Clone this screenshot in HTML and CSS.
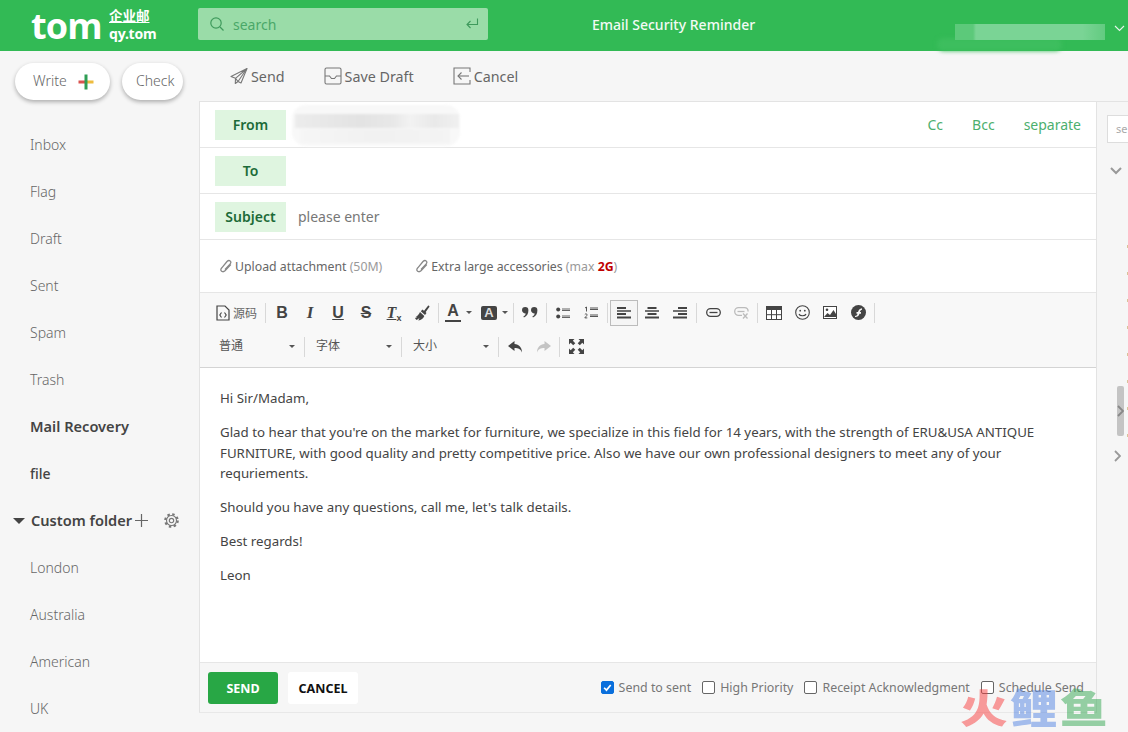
FILE: index.html
```html
<!DOCTYPE html>
<html lang="en">
<head>
<meta charset="utf-8">
<title>Compose</title>
<link rel="stylesheet" href="styles.css">
</head>
<body>
<div class="app">
  <header class="topbar">
    <div class="logo">
      <span class="logo-main">tom</span>
      <span class="logo-sub"><span class="logo-cn">企业邮</span><span class="logo-en">qy.tom</span></span>
    </div>
    <div class="search">
      <svg width="16" height="16" viewBox="0 0 16 16" fill="none" stroke="#3f9a5c" stroke-width="1.2"><circle cx="7" cy="7" r="5.2"/><path d="M11 11l3.5 3.5"/></svg>
      <span class="search-text">search</span>
      <svg class="search-enter" width="14" height="14" viewBox="0 0 14 14" fill="none" stroke="#3f9a5c" stroke-width="1.1"><path d="M12.5 1.5v6H2"/><path d="M5.5 4L2 7.5 5.5 11"/></svg>
    </div>
    <div class="top-title">Email Security Reminder</div>
    <div class="user">
      <div class="user-blur-b"></div>
      <div class="user-blur-a"></div>
      <svg class="user-caret" width="11" height="7" viewBox="0 0 11 7" fill="none" stroke="#e8f6ec" stroke-width="1.1"><path d="M1 1l4.500 4.500L10 1"/></svg>
    </div>
  </header>
  <div class="body">
    <aside class="sidebar">
      <div class="side-actions">
        <button class="pill pill-write"><span class="pill-text">Write</span>
          <svg width="16" height="16" viewBox="0 0 16 16"><rect x="0.500" y="6.500" width="7" height="3" fill="#d9534f"/><rect x="8.500" y="6.500" width="7" height="3" fill="#eebc3f"/><rect x="6.500" y="0.500" width="3" height="15" fill="#2f9e55"/></svg>
        </button>
        <button class="pill pill-check"><span class="pill-text">Check</span></button>
      </div>
      <ul class="folders">
        <li>Inbox</li>
        <li>Flag</li>
        <li>Draft</li>
        <li>Sent</li>
        <li>Spam</li>
        <li>Trash</li>
        <li class="strong">Mail Recovery</li>
        <li class="file">file</li>
        <li class="custom">
          <span class="tri"></span>
          <span class="custom-name">Custom folder</span>
          <svg class="custom-plus" width="15" height="15" viewBox="0 0 15 15" stroke="#666" stroke-width="1.2"><path d="M7.500 1v13M1 7.500h13"/></svg>
          <svg class="custom-gear" width="15" height="15" viewBox="0 0 24 24" fill="none" stroke="#777"><circle cx="12" cy="12" r="8" stroke-width="1.800"/><circle cx="12" cy="12" r="10" stroke-width="3.400" stroke-dasharray="3.900 3.950"/><circle cx="12" cy="12" r="3.500" stroke-width="1.800"/></svg>
        </li>
        <li>London</li>
        <li>Australia</li>
        <li>American</li>
        <li>UK</li>
      </ul>
    </aside>
    <main class="main">
      <div class="actions">
        <a class="action act-send">
          <svg width="18" height="18" viewBox="0 0 18 18" fill="none" stroke="#777" stroke-width="1.100" stroke-linejoin="round"><path d="M17 1.500L1 9.500l4.500 1.800L17 1.500 8 14.500 5.500 11.300l-.2 5.200 2.700-2"/><path d="M8 14.500l3 1.500L17 1.500"/></svg>
          Send</a>
        <a class="action act-save">
          <svg width="18" height="18" viewBox="0 0 18 18" fill="none" stroke="#777" stroke-width="1.100"><rect x="1" y="1" width="16" height="16" rx="1.500"/><path d="M1 9h4.500l2 2.500h3l2-2.500H17"/></svg>
          Save Draft</a>
        <a class="action act-cancel">
          <svg width="18" height="18" viewBox="0 0 18 18" fill="none" stroke="#777" stroke-width="1.100"><path d="M17 5V1H1v16h16v-4"/><path d="M16 9H5"/><path d="M8.500 5.500L5 9l3.500 3.500"/></svg>
          Cancel</a>
      </div>
      <div class="compose-wrap">
        <section class="compose">
          <div class="field">
            <span class="field-label">From</span>
            <div class="from-blur"><span class="from-blur-a"></span><span class="from-blur-b"></span></div>
            <div class="field-links"><a>Cc</a><a>Bcc</a><a>separate</a></div>
          </div>
          <div class="field">
            <span class="field-label">To</span>
          </div>
          <div class="field">
            <span class="field-label">Subject</span>
            <span class="placeholder">please enter</span>
          </div>
          <div class="attach">
            <span class="attach-item">
              <svg width="12" height="14" viewBox="0 0 12 14" fill="none" stroke="#888" stroke-width="1.300"><path d="M10.800 5.500L5 11.800c-1.500 1.500-3.500 1-4-.2-.4-1 0-2 .8-2.800L7 2.500c1-1 2.500-1.200 3.300-.4.800.8.600 2-.3 3L5 10.500"/></svg>
              <span>Upload attachment <span class="muted">(50M)</span></span></span>
            <span class="attach-item attach-large">
              <svg width="12" height="14" viewBox="0 0 12 14" fill="none" stroke="#888" stroke-width="1.300"><path d="M10.800 5.500L5 11.800c-1.500 1.500-3.500 1-4-.2-.4-1 0-2 .8-2.800L7 2.500c1-1 2.500-1.200 3.300-.4.800.8.600 2-.3 3L5 10.500"/></svg>
              <span>Extra large accessories <span class="muted">(max <b class="red">2G</b>)</span></span></span>
          </div>
          <div class="editor-tools">
            <div class="tool-line">
              <span class="btn btn-src">
                <svg width="14" height="16" viewBox="0 0 14 16" fill="none" stroke="#444" stroke-width="1.200"><path d="M1 1h8l4 4v10H1z"/><path d="M5.500 7.500L3.800 10l1.700 2.500M8.500 7.500l1.700 2.500-1.700 2.500" stroke-width="1.100"/></svg>
                <span class="src-text">源码</span>
              </span>
              <i class="sep"></i>
              <span class="btn"><b class="g g-b">B</b></span>
              <span class="btn"><b class="g g-i">I</b></span>
              <span class="btn"><b class="g g-u">U</b></span>
              <span class="btn"><b class="g g-s">S</b></span>
              <span class="btn"><span class="g-tx"><b class="g g-tx-t">T</b><small class="g-x">x</small></span></span>
              <span class="btn"><svg width="16" height="16" viewBox="0 0 16 16" fill="#444"><path d="M9.500 6.500L14 .8c.6-.6 1.800.4 1.300 1.200L11 8z"/><path d="M8.500 4.500l4 3.500-1.500 2-4.200-3.800z"/><path d="M6 7l4.300 4c-1 2.500-3 4.200-6 4.500L5.500 13l-2.800 2-1.700-1.500 2.500-1.800-2.500.7C3 11.500 5 9.500 6 7z"/></svg></span>
              <i class="sep"></i>
              <span class="btn btn-drop btn-color"><span class="g-a"><b class="g">A</b><i class="a-bar"></i></span><i class="caret-s"></i></span>
              <span class="btn btn-drop btn-bg"><span class="g-abox"><b class="g">A</b></span><i class="caret-s"></i></span>
              <i class="sep"></i>
              <span class="btn"><svg width="16" height="11" viewBox="0 0 16 11" fill="#444"><path d="M0 3.200a3.200 3.200 0 1 1 6.400 0c0 3.400-1.500 6-4.400 7.300l-.7-1c1.400-.8 2.200-1.700 2.400-3C1.600 6.500 0 5 0 3.200zM9 3.200a3.200 3.200 0 1 1 6.400 0c0 3.400-1.500 6-4.400 7.300l-.7-1c1.400-.8 2.200-1.700 2.400-3C10.600 6.500 9 5 9 3.200z"/></svg></span>
              <i class="sep"></i>
              <span class="btn"><svg width="14" height="12" viewBox="0 0 14 12"><circle cx="2.200" cy="2.500" r="2" fill="#444"/><circle cx="2.200" cy="9.500" r="2" fill="#444"/><path d="M6 2h8M6 3.500h8M6 9h8M6 10.500h8" stroke="#555" stroke-width=".9"/></svg></span>
              <span class="btn"><svg width="14" height="13" viewBox="0 0 14 13" fill="none" stroke="#444"><path d="M1 2l1.500-1v4.500M.800 8.500c.4-.9 2.500-.8 2.300.4-.1.800-1.600 1.800-2.300 3h2.500" stroke-width=".9"/><path d="M6 2h8M6 3.500h8M6 9h8M6 10.500h8" stroke-width=".9"/></svg></span>
              <i class="sep"></i>
              <span class="btn btn-on"><svg width="14" height="12" viewBox="0 0 14 12" fill="#444"><path d="M0 0h9v2H0zM0 3.300h14v1.400H0zM0 6h9v2H0zM0 9.500h14v2H0z"/></svg></span>
              <span class="btn"><svg width="14" height="12" viewBox="0 0 14 12" fill="#444"><path d="M2.500 0h9v2h-9zM0 3.300h14v1.400H0zM2.500 6h9v2h-9zM0 9.500h14v2H0z"/></svg></span>
              <span class="btn"><svg width="14" height="12" viewBox="0 0 14 12" fill="#444"><path d="M5 0h9v2H5zM0 3.300h14v1.400H0zM5 6h9v2H5zM0 9.500h14v2H0z"/></svg></span>
              <i class="sep"></i>
              <span class="btn"><svg width="15" height="9" viewBox="0 0 15 9" fill="none" stroke="#444" stroke-width="1.300"><rect x=".7" y=".7" width="13.600" height="7.600" rx="3.800"/><path d="M3.500 4.500h8"/></svg></span>
              <span class="btn"><svg width="15" height="12" viewBox="0 0 15 12" fill="none" stroke="#bbb" stroke-width="1.300"><path d="M8 8.300H4.500a3.800 3.800 0 0 1 0-7.600h6a3.800 3.800 0 0 1 3.600 3.800"/><path d="M3.500 4.500h7"/><path d="M9 6.500l4.500 5M13.500 6.500l-4.500 5"/></svg></span>
              <i class="sep"></i>
              <span class="btn"><svg width="16" height="14" viewBox="0 0 16 14"><rect x=".5" y=".5" width="15" height="13" fill="#fff" stroke="#444"/><path d="M0 0h16v4H0z" fill="#444"/><path d="M5.500 4v10M10.500 4v10M0 8.700h16" stroke="#444"/></svg></span>
              <span class="btn"><svg width="15" height="15" viewBox="0 0 15 15" fill="none" stroke="#444" stroke-width="1.100"><circle cx="7.500" cy="7.500" r="6.800"/><circle cx="5.200" cy="5.700" r=".9" fill="#444" stroke="none"/><circle cx="9.800" cy="5.700" r=".9" fill="#444" stroke="none"/><path d="M4 9c.8 2.400 6.200 2.400 7 0"/></svg></span>
              <span class="btn"><svg width="14" height="13" viewBox="0 0 14 13"><rect x=".5" y=".5" width="13" height="12" fill="#fff" stroke="#444"/><path d="M1 11l3.500-4 2.500 2 3.500-5 2.500 4v3z" fill="#444"/><circle cx="4" cy="3.700" r="1.300" fill="#444"/></svg></span>
              <span class="btn"><svg width="15" height="15" viewBox="0 0 15 15"><circle cx="7.500" cy="7.500" r="7.500" fill="#444"/><path d="M11 3.200C8.600 3.400 7.500 5 7 7H5.500v1.700H6.600C6.100 10.200 5.300 10.800 4 11v1c2.500 0 3.900-1.200 4.500-3.300H10V7H8.800c.4-1 1.100-1.900 2.200-2.200z" fill="#f8f8f8"/></svg></span>
              <i class="sep"></i>
            </div>
            <div class="tool-line">
              <span class="combo combo-first"><span>普通</span><i class="caret-s"></i></span>
              <i class="sep"></i>
              <span class="combo"><span>字体</span><i class="caret-s"></i></span>
              <i class="sep"></i>
              <span class="combo"><span>大小</span><i class="caret-s"></i></span>
              <i class="sep"></i>
              <span class="btn"><svg width="15" height="12" viewBox="0 0 15 12" fill="#444"><path d="M6.500 0L0 5l6.500 5V7c4 0 6 1 7.500 4.500C14 6.500 11 3.300 6.500 3z"/></svg></span>
              <span class="btn"><svg width="15" height="12" viewBox="0 0 15 12" fill="#c4c4c4"><path d="M8.500 0L15 5l-6.500 5V7c-4 0-6 1-7.500 4.500C1 6.500 4 3.300 8.500 3z"/></svg></span>
              <i class="sep"></i>
              <span class="btn"><svg width="15" height="15" viewBox="0 0 15 15" fill="#444"><path d="M0 0h5.500L3.800 1.700 6.300 4.200 4.200 6.300 1.700 3.800 0 5.500zM15 0v5.500l-1.700-1.700-2.500 2.500-2.100-2.100 2.500-2.500L9.500 0zM0 15V9.500l1.700 1.700 2.500-2.500 2.100 2.100-2.500 2.500L5.500 15zM15 15H9.500l1.700-1.700-2.500-2.500 2.100-2.100 2.500 2.500L15 9.500z"/></svg></span>
            </div>
          </div>
          <div class="editor">
            <p>Hi Sir/Madam,</p>
            <p>Glad to hear that you're on the market for furniture, we specialize in this field for 14 years, with the strength of ERU&amp;USA ANTIQUE FURNITURE, with good quality and pretty competitive price. Also we have our own professional designers to meet any of your requriements.</p>
            <p>Should you have any questions, call me, let's talk details.</p>
            <p>Best regards!</p>
            <p>Leon</p>
          </div>
          <div class="compose-foot">
            <button class="foot-btn foot-send">SEND</button>
            <button class="foot-btn foot-cancel">CANCEL</button>
            <div class="opts">
              <label class="opt"><span class="box box-on"><svg width="13" height="13" viewBox="0 0 13 13" fill="none" stroke="#fff" stroke-width="2"><path d="M2.500 6.800l2.800 2.800 5-6"/></svg></span>Send to sent</label>
              <label class="opt"><span class="box"></span>High Priority</label>
              <label class="opt"><span class="box"></span>Receipt Acknowledgment</label>
              <label class="opt opt-last"><span class="box"></span>Schedule Send</label>
            </div>
          </div>
        </section>
        <aside class="rail">
          <div class="rail-input">se</div>
          <svg class="rail-down" width="12" height="8" viewBox="0 0 12 8" fill="none" stroke="#999" stroke-width="2"><path d="M1 1l5 5 5-5"/></svg>
          <div class="rail-marks"><i></i><i></i><i></i><i></i><i></i><i></i><i></i><i></i></div>
          <div class="rail-thumb"><svg width="7" height="12" viewBox="0 0 7 12" fill="none" stroke="#888" stroke-width="1.800"><path d="M1 1l5 5-5 5"/></svg></div>
          <svg class="rail-right" width="7" height="12" viewBox="0 0 7 12" fill="none" stroke="#999" stroke-width="1.800"><path d="M1 1l5 5-5 5"/></svg>
        </aside>
      </div>
    </main>
  </div>
  <div class="watermark"><span class="wm-a">火</span><span class="wm-b">鲤</span><span class="wm-c">鱼</span></div>
</div>
</body>
</html>
```
FILE: styles.css
```css
* { box-sizing: border-box; }
html, body { margin: 0; padding: 0; height: 100%; overflow: hidden; }
body { font-family: "Noto Sans", "Noto Sans CJK SC", sans-serif; color: #444; background: #f6f6f6; }
button { font-family: inherit; border: 0; cursor: pointer; }
ul { list-style: none; margin: 0; padding: 0; }

.app { position: relative; width: 1128px; height: 732px; overflow: hidden; display: flex; flex-direction: column; }

/* top bar */
.topbar { height: 51px; flex: none; background: #32ba55; display: flex; align-items: center; position: relative; }
.logo { width: 198px; padding-left: 31px; display: flex; align-items: center; gap: 10px; color: #fff; flex: none; }
.logo-main { font: 700 36px/51px "Open Sans", sans-serif; letter-spacing: -.8px; width: 68px; }
.logo-sub { display: flex; flex-direction: column; font-weight: 700; margin-top: -2px; }
.logo-cn { font: 700 13.500px/17px "Noto Sans CJK SC", sans-serif; text-decoration: underline; }
.logo-en { font: 700 14px/19px "Noto Sans", sans-serif; letter-spacing: -.2px; }
.search { width: 290px; height: 32px; margin-top: -3px; background: #9adca8; border-radius: 2px; display: flex; align-items: center; padding: 0 9px 0 11px; flex: none; }
.search-text { font-size: 14px; color: #4aa868; margin-left: 8px; flex: 1; }
.top-title { margin-left: 104px; margin-top: -3px; width: 340px; font-size: 14px; font-weight: 500; color: #f2fbf4; }
.user { position: relative; flex: 1; height: 51px; }
.user-blur-a { position: absolute; left: 23px; top: 24px; width: 150px; height: 16px; background: linear-gradient(90deg, #5cc97a 0, #5cc97a 12%, #7ad495 14%, #7ad495 85%, #62cb80 100%); filter: blur(.7px); }
.user-blur-b { position: absolute; left: 5px; top: 38px; width: 125px; height: 13px; border-radius: 8px; background: #3dbe5e; filter: blur(2px); }
.user-caret { position: absolute; right: 3px; top: 25px; }

/* layout */
.body { flex: 1; display: flex; min-height: 0; }
.sidebar { width: 199px; flex: none; background: #f6f6f6; overflow: hidden; }
.side-actions { display: flex; gap: 12px; padding: 12px 0 0 15px; height: 70px; }
.pill { height: 37px; border-radius: 19px; background: #fff; box-shadow: 0 2px 4px rgba(0, 0, 0, .3); font-size: 14px; font-weight: 300; color: #666; display: flex; align-items: center; }
.pill-text { margin-top: -2px; }
.pill-write { width: 95px; padding: 0 0 0 18px; gap: 11px; }
.pill-check { width: 61px; padding: 0 0 0 14px; }
.folders li { height: 47px; line-height: 47px; padding-left: 30px; font-size: 14px; font-weight: 300; color: #666; }
.folders li.strong { font-size: 14.600px; font-weight: 600; color: #444; }
.folders li.file { font-weight: 500; color: #444; }
.folders li.custom { display: flex; align-items: center; padding-left: 13px; font-size: 14.600px; font-weight: 600; color: #444; }
.tri { width: 0; height: 0; border-left: 6px solid transparent; border-right: 6px solid transparent; border-top: 6px solid #444; }
.custom-name { margin-left: 6px; }
.custom-plus { margin-left: 2px; }
.custom-gear { margin-left: 15px; }

/* main */
.main { flex: 1; display: flex; flex-direction: column; min-width: 0; }
.actions { height: 50px; flex: none; display: flex; align-items: center; padding-left: 31px; font-size: 14.300px; color: #666; }
.action { display: flex; align-items: center; gap: 3px; }
.act-save { margin-left: 39px; }
.act-cancel { margin-left: 39px; }
.compose-wrap { flex: 1; display: flex; min-height: 0; }
.compose { width: 898px; height: 612px; background: #fff; border: 1px solid #e3e3e3; border-bottom-color: #e8e8e8; display: flex; flex-direction: column; flex: none; }
.field { height: 46px; flex: none; border-bottom: 1px solid #e6e6e6; display: flex; align-items: flex-start; padding: 8px 0 0 15px; position: relative; }
.field-label { width: 71px; height: 30px; background: #dff5e0; color: #1c6b38; font-size: 14px; font-weight: 600; text-align: center; line-height: 30px; }
.placeholder { margin-left: 12px; font-size: 14px; line-height: 30px; color: #777; }
.from-blur { position: absolute; left: 92px; top: 3px; width: 168px; height: 41px; background: #f8f8f8; border-radius: 14px; filter: blur(1px); overflow: hidden; }
.from-blur-a { display: block; margin: 9px 0 0 3px; width: 164px; height: 14px; background: linear-gradient(90deg, #ececec, #e3e3e3 40%, #e8e8e8 60%, #f2f2f2 70%, #e9e9e9 85%, #f0f0f0); }
.from-blur-b { display: block; margin: 1px 0 0 8px; width: 150px; height: 14px; background: linear-gradient(90deg, #f6f6f6, #f1f1f1 50%, #f4f4f4); }
.field-links { margin-left: auto; padding-right: 15px; display: flex; gap: 29px; font-size: 14px; line-height: 30px; color: #4caf6e; }
.attach { height: 53px; flex: none; display: flex; align-items: center; padding-left: 20px; font-size: 12.300px; color: #666; border-bottom: 1px solid #e6e6e6; }
.attach-item { display: inline-flex; align-items: center; gap: 3px; }
.attach-large { margin-left: 34px; }
.muted { color: #999; }
.red { color: #c00000; font-weight: 700; }

/* editor toolbar */
.editor-tools { height: 75px; flex: none; background: #f8f8f8; border-bottom: 1px solid #d4d4d4; padding: 6px 0 0 8px; }
.tool-line { display: flex; align-items: center; height: 27px; margin-bottom: 7px; }
.btn { width: 28px; height: 26px; display: flex; align-items: center; justify-content: center; flex: none; border: 1px solid transparent; }
.btn-on { border-color: #bcbcbc; background: #f5f5f5; }
.btn-src { width: 55px; justify-content: flex-start; padding-left: 7px; gap: 3px; }
.src-text { font-size: 12px; color: #666; }
.sep { width: 1px; height: 20px; background: #d8d8d8; margin: 0 2px; flex: none; }
.g { font: 700 16px/1 "Liberation Sans", sans-serif; color: #444; }
.g-i { font-style: italic; font-family: "Liberation Serif", serif; font-size: 17px; }
.g-u { text-decoration: underline; }
.g-s { text-decoration: line-through; }
.g-tx { display: inline-flex; align-items: flex-end; }
.g-tx-t { font-style: italic; font-family: "Liberation Serif", serif; text-decoration: underline; }
.g-x { font: 700 9px/1 "Liberation Sans", sans-serif; color: #444; margin-bottom: -2px; }
.btn-drop { justify-content: flex-start; padding-left: 3px; gap: 5px; }
.btn-color { width: 36px; }
.btn-bg { width: 34px; }
.g-a { display: flex; flex-direction: column; align-items: center; width: 16px; }
.a-bar { width: 16px; height: 2px; background: #444; margin-top: 1px; }
.g-abox { width: 16px; height: 14px; border-radius: 2px; background: #444; display: flex; align-items: center; justify-content: center; }
.g-abox .g { color: #ddd; font-size: 13px; }
.caret-s { width: 0; height: 0; border-left: 3px solid transparent; border-right: 3px solid transparent; border-top: 3px solid #555; flex: none; }
.combo { width: 92px; height: 26px; padding: 0 7px 3px 9px; display: flex; align-items: center; justify-content: space-between; font-size: 12px; color: #555; flex: none; }
.combo .caret-s { margin-top: 3px; }
.combo-first { width: 94px; padding-left: 11px; }

/* editor */
.editor { flex: 1; min-height: 0; padding: 20px 30px 0 20px; font-size: 13.300px; line-height: 20.800px; color: #444; }
.editor p { margin: 0 0 13px; }

.compose-foot { height: 50px; flex: none; background: #f6f6f6; border-top: 1px solid #e6e6e6; display: flex; align-items: center; padding: 0 12px 0 8px; }
.foot-btn { width: 70px; height: 32px; border-radius: 3px; padding: 1px 0 0; font-size: 12.500px; font-weight: 700; }
.foot-send { background: #28a745; color: #fff; }
.foot-cancel { background: #fff; color: #111; margin-left: 10px; }
.opts { margin-left: auto; margin-top: -1px; display: flex; gap: 11px; font-size: 12.400px; color: #777; }
.opt { display: flex; align-items: center; gap: 5px; }
.box { width: 13px; height: 13px; border: 1px solid #666; border-radius: 2px; background: #fff; flex: none; }
.box-on { background: #0a6fdc; border-color: #0a6fdc; display: flex; align-items: center; justify-content: center; }

/* right rail */
.rail { flex: 1; position: relative; background: #f6f6f6; overflow: hidden; border-top: 1px solid #e3e3e3; }
.rail-input { position: absolute; left: 10px; top: 13px; width: 40px; height: 28px; background: #fff; border: 1px solid #ddd; font-size: 11px; color: #aaa; line-height: 26px; padding-left: 8px; }
.rail-down { position: absolute; left: 13px; top: 65px; }
.rail-marks { position: absolute; left: 30px; top: 143px; display: flex; flex-direction: column; gap: 24px; }
.rail-marks i { display: block; width: 1px; height: 3px; background: #d9c39a; }
.rail-thumb { position: absolute; left: 20px; top: 284px; width: 7px; height: 50px; background: #c4c4c4; border-radius: 2px; display: flex; align-items: center; }
.rail-right { position: absolute; left: 17px; top: 348px; }

/* watermark over the page corner */
.watermark { position: absolute; left: 960px; top: 686px; display: flex; font: 900 40px/40px "Noto Sans CJK SC", sans-serif; letter-spacing: 2px; transform: scaleX(1.19); transform-origin: left top; pointer-events: none; }
.wm-a { color: rgba(248, 60, 60, .5); }
.wm-b { color: rgba(80, 130, 225, .5); }
.wm-c { color: rgba(50, 165, 80, .5); }
```
